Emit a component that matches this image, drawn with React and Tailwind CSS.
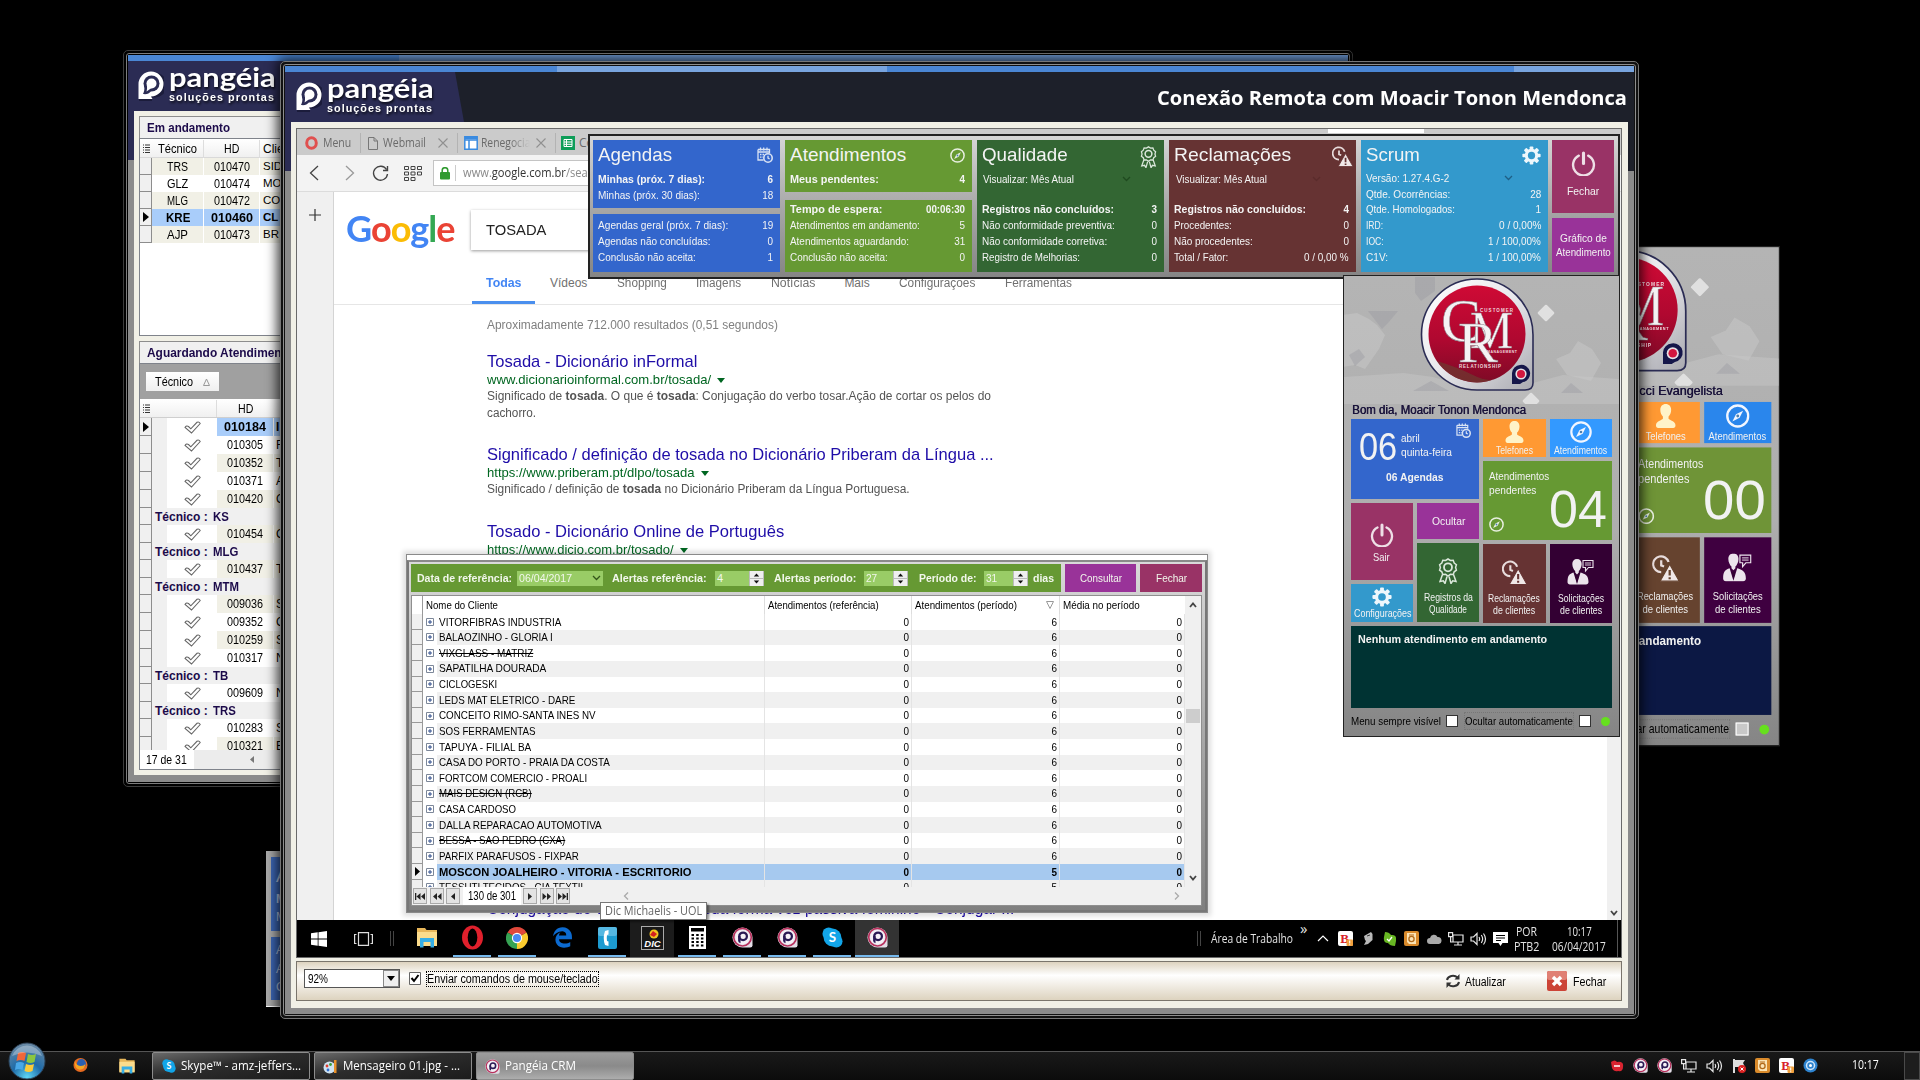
import React, { useLayoutEffect, useRef, useState } from "react";
import { FaEdgeLegacy } from "react-icons/fa";

/* Text squeezed or stretched horizontally so that it takes exactly w pixels. */
function T({ w, className = "", children }) {
  const ref = useRef(null);
  const [k, setK] = useState(1);
  useLayoutEffect(() => {
    const n = ref.current.offsetWidth;
    if (n) setK(w / n);
  }, [w]);
  return (
    <span className={"inline-block shrink-0 whitespace-nowrap " + className} style={{ width: w }}>
      <span ref={ref} className="inline-block origin-left" style={{ transform: `scaleX(${k})` }}>
        {children}
      </span>
    </span>
  );
}

/* ---------- icons ---------- */
const Power = ({ s = 24 }) => (
  <svg width={s} height={s} viewBox="0 0 24 24" fill="none" stroke="#eedfe6" strokeWidth="2.3" strokeLinecap="round">
    <path d="M7.5 4.5a10 10 0 1 0 9 0" />
    <path d="M12 2v10" strokeWidth="3" />
  </svg>
);
const Compass = ({ s = 16, c = "#e8efe0" }) => (
  <svg width={s} height={s} viewBox="0 0 20 20" fill="none" stroke={c} strokeWidth="2">
    <circle cx="10" cy="10" r="8.8" />
    <path d="M14.5 5.5l-3 6-6 3 3-6z" fill={c} stroke="none" />
    <circle cx="10" cy="10" r="1.2" fill="#4d80b0" stroke="none" />
  </svg>
);
const Medal = ({ w = 20, h = 26 }) => (
  <svg width={w} height={h} viewBox="0 0 20 26" fill="none" stroke="#dbe8db" strokeWidth="1.5">
    <path d="M10 1l2.4 1.5 2.8-.2 1 2.7 2.2 1.7-.8 2.7.8 2.7-2.2 1.7-1 2.7-2.8-.2L10 18l-2.4-1.7-2.8.2-1-2.7L1.600 12.100l.8-2.7-.8-2.700L3.800 5l1-2.700 2.800.2z" />
    <circle cx="10" cy="9.300" r="4" strokeWidth="1.8" />
    <path d="M4.500 16.500L2 23.500l3.300-.7L7 25.500l2-7M15.500 16.500l2.500 7-3.300-.7L13 25.500l-2-7" />
  </svg>
);
const ClockWarn = ({ s = 24, bg = "#663333" }) => (
  <svg width={s} height={s} viewBox="0 0 24 24" fill="none" stroke="#e8dcdc" strokeWidth="2">
    <path d="M8 15.500A7 7 0 1 1 14.500 6.500" />
    <path d="M8 5v4.500l2.500 1" />
    <path d="M15.500 8.500L24 23.500H7z" fill="#f0e8e8" stroke={bg} strokeWidth="1" />
    <path d="M15.500 13.500v5M15.500 20v1.800" stroke={bg} />
  </svg>
);
const Gear = ({ s = 20 }) => (
  <svg width={s} height={s} viewBox="0 0 24 24">
    <g fill="#eef7fc">
      <rect x="9.700" y="0.500" width="4.600" height="23" rx="1" />
      <rect x="9.700" y="0.500" width="4.600" height="23" rx="1" transform="rotate(45 12 12)" />
      <rect x="9.700" y="0.500" width="4.600" height="23" rx="1" transform="rotate(90 12 12)" />
      <rect x="9.700" y="0.500" width="4.600" height="23" rx="1" transform="rotate(135 12 12)" />
      <circle cx="12" cy="12" r="8.500" />
    </g>
    <circle cx="12" cy="12" r="4.600" fill="#3399cc" />
  </svg>
);
const CalClock = ({ s = 15 }) => (
  <svg width={s} height={s} viewBox="0 0 16 16" fill="none" stroke="#d8e2f4" strokeWidth="1.300">
    <path d="M1 2.500h11.500V6M1 2.500V13h5.500M1 5h11.500" />
    <path d="M3.500 .5v3M6.700 .5v3M10 .5v3" />
    <path d="M3 7.500h4M3 10.200h3" strokeDasharray="1.500 1" />
    <circle cx="11" cy="11" r="4.200" strokeWidth="1.600" />
    <path d="M11 8.800V11l1.600.8" />
  </svg>
);
const Person = () => (
  <svg width="19" height="22" viewBox="0 0 19 22">
    <path d="M9.500 0c3 0 5 2 5 5.500 0 2.500-1 4.800-2.400 6v2c1 1.500 6.400 2 6.400 6 0 1.600-.8 2.500-2 2.500h-14c-1.200 0-2-.9-2-2.500 0-4 5.400-4.500 6.400-6v-2C5.500 10.300 4.500 8 4.500 5.500 4.500 2 6.500 0 9.500 0z" fill="#fff3c8" />
  </svg>
);
const Talk = () => (
  <svg width="27" height="26" viewBox="0 0 27 26">
    <path d="M10 0c3 0 4.700 2 4.700 5S13 11 11.800 12v1.500L10 15.500 8.200 13.500V12C7 11 5.300 8 5.300 5S7 0 10 0z" fill="#ece4ec" />
    <path d="M6.500 13.500L10 25h0l3.500-11.500c4.500 1.500 8 2.500 8 9.500 0 1.500-1 2.500-2.500 2.500H3C1.500 25.500.5 24.500.5 23c0-7 2-8 6-9.500z" fill="#ece4ec" />
    <path d="M10 16l1.500 2-1.500 6-1.500-6z" fill="#330033" />
    <path d="M16 1.500h10v7h-4.500L18.500 12v-3.500H16z" fill="none" stroke="#ece4ec" strokeWidth="1.100" />
    <path d="M18 4h6M18 6h6" stroke="#ece4ec" strokeWidth="0.900" />
  </svg>
);
const Chev = ({ c = "#1f5f85" }) => (
  <svg width="9" height="6" viewBox="0 0 9 6" fill="none" stroke={c} strokeWidth="1.300">
    <path d="M1 1l3.500 3.500L8 1" />
  </svg>
);
const PBall = ({ s = 21 }) => (
  <svg width={s} height={s} viewBox="0 0 22 22">
    <path d="M11 .5a10.500 10.500 0 0 1 10.500 10.500v8q0 2.500-2.500 2.500h-8A10.500 10.500 0 0 1 11 .5z" fill="#e3dde6" />
    <circle cx="11" cy="10.700" r="9.200" fill="none" stroke="#b8305c" strokeWidth="1.700" />
    <circle cx="11" cy="10.700" r="7.600" fill="#f6f1f7" />
    <circle cx="11.600" cy="9.800" r="4" fill="none" stroke="#2a1a55" strokeWidth="2.400" />
    <path d="M6.400 9.500h2.500v7.500q-2.500-.5-2.500-2.500z" fill="#2a1a55" />
  </svg>
);
const Folder = ({ w = 20, h = 21 }) => (
  <svg width={w} height={h} viewBox="0 0 20 21">
    <path d="M0 1h8l1.500 2H20v15H0z" fill="#e8b75a" />
    <path d="M0 5h20v14H0z" fill="#fbdc8c" />
    <path d="M3 11h14v9.500h-3.500V15h-7v5.500H3z" fill="#36aee6" />
  </svg>
);
const SkypeIcon = ({ s = 21 }) => (
  <svg width={s} height={s} viewBox="0 0 22 22">
    <circle cx="7" cy="7" r="6.500" fill="#12a5e8" />
    <circle cx="15" cy="15" r="6.500" fill="#12a5e8" />
    <circle cx="11" cy="11" r="9.300" fill="#12a5e8" />
    <text x="11" y="16" textAnchor="middle" fontFamily="Lato" fontWeight="700" fontSize="14" fill="#fff">S</text>
  </svg>
);
const Net = () => (
  <svg width="16" height="14" viewBox="0 0 16 14" fill="none" stroke="#e6e6e6" strokeWidth="1.200">
    <path d="M5 3h10v7H5zM10 10v3M6 13h8M.6.6h4v4h-4zM2.600 4.600V10H5" />
  </svg>
);
const Speaker = () => (
  <svg width="17" height="14" viewBox="0 0 17 14" fill="none" stroke="#e6e6e6" strokeWidth="1.200">
    <path d="M1 5h2.500L7 1.500v11L3.500 9H1zM9 5q1.300 2 0 4M11.300 3q2.700 4 0 8M13.500 1.500q4 5.500 0 11" />
  </svg>
);
const BIcon = ({ s = 15 }) => (
  <svg width={s} height={s} viewBox="0 0 15 15">
    <rect width="15" height="15" rx="2" fill="#fff" />
    <text x="6.500" y="12" textAnchor="middle" fontFamily="Liberation Serif" fontWeight="700" fontSize="13" fill="#d8202a">B</text>
    <rect x="8.500" y="8.500" width="6.500" height="6.500" rx="1" fill="#f2a03c" />
    <path d="M11.700 9.500v3M11.700 13.200v1" stroke="#fff" strokeWidth="1.100" />
  </svg>
);
const Orange = () => (
  <svg width="15" height="15" viewBox="0 0 15 15">
    <rect width="15" height="15" rx="2" fill="#d98a2b" />
    <path d="M3 2h9v11H5L3 11z" fill="#fbe3b4" />
    <circle cx="7.500" cy="8" r="2.600" fill="none" stroke="#b2691a" strokeWidth="1.300" />
    <path d="M5 4h5" stroke="#b2691a" />
  </svg>
);

/* ---------- header logo ---------- */
function Brand() {
  return (
    <div className="flex items-start text-white">
      <svg width="26" height="30" viewBox="0 0 26 30" className="mt-[1px]">
        <path d="M13 2a12.500 12.500 0 1 1 0 24H14v4H1V14.500A12.500 12.500 0 0 1 13 2z" fill="#11122c" opacity=".6" />
        <path d="M13 .5A12.500 12.500 0 0 1 13 25.500l1.500 2.500H.5V13A12.500 12.500 0 0 1 13 .5z" fill="#fff" />
        <circle cx="13.500" cy="12.500" r="8" fill="#2b2c54" />
        <circle cx="13.500" cy="12.500" r="5" fill="#fff" />
        <path d="M6 14c1 4 0 7-1 9 4 .5 6-.500 8-2.500z" fill="#2b2c54" />
        <path d="M8.800 14c.5 3 .2 5-.3 6.500l5-3.500z" fill="#fff" />
      </svg>
      <div className="ml-[5px] flex flex-col font-['Lato'] font-bold drop-shadow-[1px_2px_1px_rgba(0,0,0,0.7)]">
        <T w={107} className="-mt-[3px] h-[20px] text-[26px] leading-[20px]">pangéia</T>
        <T w={106} className="mt-[5px] h-[10px] font-['Liberation_Sans'] text-[10.500px] leading-[10px] tracking-[1px]">soluções prontas</T>
      </div>
    </div>
  );
}

/* ---------- background window with the queues ---------- */
const running = [
  ["TRS", "010470", "SID", false],
  ["GLZ", "010474", "MO", false],
  ["MLG", "010472", "CO", false],
  ["KRE", "010460", "CL", true],
  ["AJP", "010473", "BR", false],
];
const waiting = [
  ["010184", "I", 2], ["010305", "F", 0], ["010352", "T", 1], ["010371", "A", 0], ["010420", "C", 1],
  "KS", ["010454", "C", 1], "MLG", ["010437", "T", 1], "MTM",
  ["009036", "S", 1], ["009352", "C", 0], ["010259", "S", 1], ["010317", "N", 0],
  "TB", ["009609", "N", 0], "TRS", ["010283", "S", 0], ["010321", "E", 1],
];
const tone = ["bg-white", "bg-[#f1f0e6]", "bg-[#a9cdfa] font-bold"];
const ListMark = () => (
  <svg width="7" height="10" viewBox="0 0 7 10" stroke="#333" strokeWidth="1">
    <path d="M0 1h1M2 1h5M0 3.500h1M2 3.500h5M0 6h1M2 6h5M0 8.500h1M2 8.500h5" />
  </svg>
);
const RowMark = ({ on }) => (
  <div className="flex w-[12px] shrink-0 items-center justify-center border-r border-b border-[#8d8d8d] bg-[#f0f0f0]">
    {on && <svg width="6" height="10" viewBox="0 0 6 10"><path d="M0 0l6 5-6 5z" /></svg>}
  </div>
);
function QueueWindow() {
  return (
    <div className="absolute left-[123px] top-[50px] h-[737px] w-[1230px] rounded-[5px] border border-[#3c3c3c] bg-black p-[2px]">
      <div className="flex h-full w-full flex-col rounded-[3px] border border-[#7d7d7d] p-px">
        <div className="flex h-[6px] shrink-0">
          <div className="w-[271px] bg-[#4a86d4]" />
          <div className="flex-1 bg-[#6f9cd9]" />
        </div>
        <div className="flex min-h-0 flex-1 flex-col bg-[linear-gradient(#2b2c54_0_99px,#8b8b8b_99px)] px-[6px] pb-[7px]">
          <div className="h-[50px] shrink-0 pl-[4px] pt-[9px]"><Brand /></div>
          <div className="flex min-h-0 flex-1 flex-col bg-[#f1f0e6] pl-[5px] pt-[5px] font-['Liberation_Sans'] text-[12px]">
            <div className="flex h-[22px] items-center border-l border-t border-[#8d8d8d] bg-[#f0f0f0] pl-[7px] font-bold text-[#1c0a4a]">
              <T w={83}>Em andamento</T>
            </div>
            <div className="h-[198px] border border-[#7f838b] bg-white">
              <div className="flex h-[19px] items-center border-b border-[#d9d9d9] bg-gradient-to-b from-white to-[#f0f0f0] pt-px">
                <div className="flex w-[12px] justify-center"><ListMark /></div>
                <div className="flex w-[52px] justify-center border-r border-[#ddd]"><T w={39}>Técnico</T></div>
                <div className="flex w-[56px] justify-center border-r border-[#ddd]"><T w={15}>HD</T></div>
                <span className="pl-[3px]">Clie</span>
              </div>
              {running.map(([a, b, c, on], i) => (
                <div key={b} className="flex h-[17px]">
                  <RowMark on={on} />
                  <div className={"flex min-w-0 flex-1 items-center " + tone[on ? 2 : (i + 1) % 2]}>
                    <div className="flex h-full w-[52px] items-center justify-center border-r border-white"><T w={on ? 24 : 21}>{a}</T></div>
                    <div className="flex h-full w-[56px] items-center justify-center border-r border-white"><T w={on ? 42 : 36}>{b}</T></div>
                    <span className="pl-[3px] text-[11.500px]">{c}</span>
                  </div>
                </div>
              ))}
            </div>
            <div className="mt-[5px] flex h-[22px] items-center border-l border-t border-[#8d8d8d] bg-[#f0f0f0] pl-[7px] font-bold text-[#1c0a4a]">
              <T w={146}>Aguardando Atendimento</T>
            </div>
            <div className="flex h-[407px] flex-col overflow-hidden border border-[#7f838b] bg-white">
              <div className="flex h-[35px] shrink-0 items-center bg-[#a0a0a0] pl-[6px]">
                <div className="flex h-[19px] w-[73px] items-center justify-between bg-gradient-to-b from-white to-[#efefef] px-[9px]">
                  <T w={38}>Técnico</T>
                  <svg width="7" height="8" viewBox="0 0 7 8" fill="none" stroke="#999"><path d="M3.500 1L6.500 7.500h-6z" /></svg>
                </div>
              </div>
              <div className="flex h-[19px] shrink-0 items-center border-b border-[#cfcfcf] bg-gradient-to-b from-white to-[#f0f0f0] pt-px">
                <div className="flex w-[12px] justify-center"><ListMark /></div>
                <div className="h-full w-[65px] border-r border-[#ddd]" />
                <div className="flex w-[57px] justify-center"><T w={15}>HD</T></div>
              </div>
              <div className="min-h-0 flex-1 overflow-hidden">
                {waiting.map((r, i) =>
                  typeof r === "string" ? (
                    <div key={i} className="flex h-[17px] bg-[#f0f0f0]">
                      <RowMark />
                      <div className="flex items-center pl-[3px] font-bold text-[#1c0a4a]">
                        <T w={53}>Técnico :</T><span className="ml-[5px] inline-block origin-left scale-x-95">{r}</span>
                      </div>
                    </div>
                  ) : (
                    <div key={i} className="flex h-[18px]">
                      <RowMark on={i === 0} />
                      <div className="w-[15px] shrink-0 bg-[#f0f0f0]" />
                      <div className="flex w-[49px] shrink-0 items-center justify-center pl-[2px]">
                        <svg width="17" height="13" viewBox="0 0 17 13" fill="#fff" stroke="#666" strokeWidth="1.100">
                          <path d="M1 6.500q1.500-2.500 3.500-1l2.300 2.300L13 1.300q2-1 3.200 1.200L7.500 12z" />
                        </svg>
                      </div>
                      <div className={"ml-px flex min-w-0 flex-1 items-center " + tone[r[2]]}>
                        <div className="flex h-full w-[57px] items-center justify-center border-r border-white"><T w={r[2] === 2 ? 42 : 36}>{r[0]}</T></div>
                        <span className="pl-[2px]">{r[1]}</span>
                      </div>
                    </div>
                  )
                )}
              </div>
              <div className="flex h-[19px] shrink-0 items-center bg-[#ececec]">
                <div className="flex h-full w-[54px] items-center bg-white pl-[6px]"><T w={41}>17 de 31</T></div>
                <svg width="4" height="7" viewBox="0 0 4 7" className="ml-[56px]"><path d="M4 0v7L0 3.500z" fill="#777" /></svg>
              </div>
            </div>
          </div>
        </div>
      </div>
    </div>
  );
}

/* ---------- CRM side menu ---------- */
const Tile = ({ c = "", children }) => (
  <div className={"flex flex-col items-center overflow-hidden text-[#f2f2f2] " + c}>{children}</div>
);
function CrmLogo() {
  return (
    <svg width="277" height="128" viewBox="0 1 277 128">
      <defs>
        <linearGradient id="silver" x1="0" y1="0" x2="1" y2="1">
          <stop offset="0" stopColor="#ffffff" />
          <stop offset=".5" stopColor="#e8e8ec" />
          <stop offset="1" stopColor="#a9a9b0" />
        </linearGradient>
        <linearGradient id="ruby" x1="0" y1="0" x2="0" y2="1">
          <stop offset="0" stopColor="#cf0a35" />
          <stop offset=".55" stopColor="#b00830" />
          <stop offset="1" stopColor="#7e0a26" />
        </linearGradient>
      </defs>
      <path d="M0 40l14-2 12 6 8 6 8 10-6 14-14 20-10-4-12 2zM213 84l14-6 8-12 14 8 9 14-10 18-24-6z" fill="#c4c4c4" opacity=".6" />
      <path d="M0 102l60-4 30 4 40 12 60-6 30-8 57 4v26H0z" fill="#c8c8c8" opacity=".45" />
      <path d="M72 2h20v14l-14 10-6-8zM25 36h30l-10 12-6 6zM6 80l10-6 6 8-10 9zM218 118l10-10 12 10zM70 116l18-10 18 10z" fill="#98999f" opacity=".4" />
      <path d="M203 31l7 7-7 7-7-7zM188 119l7 7-7 7-7-7z" fill="#e0e0e0" stroke="#e0e0e0" strokeWidth="2.500" strokeLinejoin="round" />
      <path d="M134 4a56 56 0 0 1 56 56v48q0 7-8 7h-48a55.500 55.500 0 0 1 0-111z" fill="url(#silver)" stroke="#2b2c54" strokeWidth="1.600" />
      <circle cx="134" cy="59" r="48.500" fill="url(#ruby)" />
      <path d="M94 86q20 6 36 14t24 3a48 48 0 0 1-60-17z" fill="#6d3b30" opacity=".7" />
      <g fill="#f5f3f4" fontFamily="Liberation Serif" stroke="#8a8088" strokeWidth=".5">
        <text x="98" y="66" fontSize="62" textLength="40" lengthAdjust="spacingAndGlyphs">C</text>
        <text x="127" y="73" fontSize="52" textLength="43" lengthAdjust="spacingAndGlyphs">M</text>
        <text x="115" y="87" fontSize="56" textLength="40" lengthAdjust="spacingAndGlyphs">R</text>
      </g>
      <g fill="#f0d8de" fontFamily="Liberation Sans" fontSize="4.500" fontWeight="700">
        <text x="137" y="37" textLength="33">CUSTOMER</text>
        <text x="144" y="78" fontSize="3.500" textLength="30">MANAGEMENT</text>
        <text x="116" y="93" textLength="42">RELATIONSHIP</text>
      </g>
      <path d="M177 90a8.500 8.500 0 1 1 3 17l-3 2h-8V98a8.500 8.500 0 0 1 8-8z" fill="#15164a" />
      <circle cx="178" cy="99" r="5.600" fill="#e6e0e6" />
      <circle cx="178" cy="99" r="4" fill="#d3173f" />
    </svg>
  );
}
function CrmMenu({ alt }) {
  return (
    <div className="flex h-[462px] w-[277px] flex-col overflow-hidden border border-[#222] bg-gradient-to-b from-[#b4b4b4] via-[#aeaeae] via-[55%] to-[#858585] font-['Liberation_Sans'] text-[10.500px]">
      <div className="-ml-px h-[125px] shrink-0"><CrmLogo /></div>
      <div className="flex h-[18px] shrink-0 items-center pl-[8px] text-[12px] text-[#19123a]">
        {alt ? <T w={77} className="-mt-[3px] ml-[138px] [text-shadow:0.4px_0_currentColor]">cci Evangelista</T> : <T w={174} className="[text-shadow:0.5px_0_currentColor]">Bom dia, Moacir Tonon Mendonca</T>}
      </div>
      <div className="flex h-[203px] shrink-0 gap-[4px] pl-[7px]">
        <div className="flex w-[128px] flex-col gap-[4px]">
          <div className="h-[80px] bg-[#3366cc] text-[#f2f2f2]">
            <div className="flex h-[50px]">
              <T w={38} className="ml-[8px] mt-[3px] h-[47px] text-[38px] leading-[51px]">06</T>
              <div className="ml-[4px] flex w-[53px] flex-col pt-[12px] leading-[14px]">
                <T w={19} className="h-[14px] text-[11px]">abril</T>
                <T w={51} className="h-[14px] text-[11px]">quinta-feira</T>
              </div>
              <div className="ml-[2px] pt-[4px]"><CalClock /></div>
            </div>
            <div className="flex h-[17px] items-center justify-center pr-px font-bold"><T w={58}>06 Agendas</T></div>
          </div>
          <div className="flex gap-[4px]">
            <div className="flex w-[62px] flex-col gap-[4px]">
              <Tile c="h-[77px] bg-[#993366] pr-px pt-[20px]"><Power /><T w={17} className="mt-[3px] text-[11px] leading-[14px]">Sair</T></Tile>
              <Tile c="h-[38px] bg-[#3399cc] pt-[3px]"><Gear /><T w={57} className="text-[10px] leading-[14px]">Configurações</T></Tile>
            </div>
            <div className="flex w-[62px] flex-col gap-[4px]">
              <Tile c="h-[36px] justify-center bg-[#993399]"><T w={33} className="text-[11px]">Ocultar</T></Tile>
              <Tile c="h-[79px] bg-[#336633] pt-[15px] leading-[12px]"><Medal /><T w={49} className="mt-[7px]">Registros da</T><T w={38}>Qualidade</T></Tile>
            </div>
          </div>
        </div>
        <div className="flex w-[129px] flex-col gap-[4px]">
          <div className="flex gap-[4px]">
            <Tile c="h-[38px] w-[63px] bg-[#ff9933] pr-px pt-[2px]"><Person /><T w={37} className="mt-px leading-[12px]">Telefones</T></Tile>
            <Tile c={(alt ? "bg-[#2a86ec]" : "bg-[#3399ff]") + " h-[38px] w-[62px] pr-px pt-[2px]"}><Compass s={22} c="#f2f6ff" /><T w={53} className="mt-px leading-[12px]">Atendimentos</T></Tile>
          </div>
          <div className={"flex h-[79px] justify-between text-[#f2f2f2] " + (alt ? "bg-[#6f9437]" : "bg-[#669933]")}>
            <div className="flex flex-col pl-[6px] pt-[8px] text-[11px] leading-[14px]">
              <T w={60}>Atendimentos</T>
              <T w={47}>pendentes</T>
              <div className="mt-[20px]"><Compass s={15} /></div>
            </div>
            <T w={58} className="mr-[9px] h-[79px] pt-[20px] text-[52px] leading-[56px]">{alt ? "00" : "04"}</T>
          </div>
          <div className="flex gap-[4px] leading-[12px]">
            <Tile c={(alt ? "bg-[#66432f]" : "bg-[#663333]") + " h-[79px] w-[63px] pr-px pt-[16px]"}><ClockWarn s={25} bg={alt ? "#66432f" : "#663333"} /><T w={52} className="mt-[7px]">Reclamações</T><T w={42}>de clientes</T></Tile>
            <Tile c={(alt ? "bg-[#3f0040]" : "bg-[#330033]") + " h-[79px] w-[62px] pr-px pt-[15px]"}><Talk /><T w={46} className="mt-[7px]">Solicitações</T><T w={42}>de clientes</T></Tile>
          </div>
        </div>
      </div>
      <div className={"ml-[7px] mt-[4px] h-[82px] w-[261px] shrink-0 pl-[7px] pt-[6px] text-[11px] font-bold leading-[14px] text-[#f2f2f2] " + (alt ? "bg-[#0c1844]" : "bg-[#003333]")}>
        {alt ? <T w={189}><span className="invisible">Nenhum atendimento em </span>andamento</T> : <T w={189}>Nenhum atendimento em andamento</T>}
      </div>
      <div className="flex h-[26px] items-center pl-[7px] text-[11px] text-black">
        <T w={90}>Menu sempre visível</T>
        <div className="ml-[5px] h-[12px] w-[12px] border border-[#333] bg-white" />
        <T w={108} className="ml-[7px] outline-1 outline-dotted outline-[#777]">Ocultar automaticamente</T>
        <div className={"ml-[6px] h-[12px] w-[12px] border " + (alt ? "border-white bg-[#c8c8c8]" : "border-[#333] bg-white")} />
        <div className="ml-[10px] h-[9px] w-[9px] rounded-full bg-[#66e01e]" />
      </div>
    </div>
  );
}

/* ---------- indicator panel ---------- */
const Stat = ({ l, w, v, vw, b, h = "h-[16px]" }) => (
  <div className={"flex items-center justify-between " + h + (b ? " font-bold" : "")}>
    <T w={w}>{l}</T>
    {vw ? <T w={vw}>{v}</T> : <span className="inline-block origin-right scale-x-90">{v}</span>}
  </div>
);
const Head = ({ t, w, children }) => (
  <div className="flex h-[30px] items-center justify-between text-[19px]">
    <T w={w} className="mt-px">{t}</T>
    {children}
  </div>
);
const cell = "flex flex-col overflow-hidden pl-[5px] pr-[7px] ";
function Indicators() {
  return (
    <div className="absolute left-[291px] top-[5px] flex h-[145px] w-[1032px] gap-[5px] border-2 border-[#222] bg-gradient-to-b from-[#d6d6d6] via-[#a8a8a8] to-[#858585] pl-[3px] pt-[4px] font-['Liberation_Sans'] text-[11px] text-[#f4f4f4]">
      <div className="flex w-[187px] flex-col gap-[6px]">
        <div className={cell + "h-[68px] bg-[#3366cc]"}>
          <Head t="Agendas" w={74}><CalClock s={16} /></Head>
          <div className="h-px" />
          <Stat b l="Minhas (próx. 7 dias):" w={107} v="6" />
          <Stat l="Minhas (próx. 30 dias):" w={102} v="18" />
        </div>
        <div className={cell + "h-[58px] bg-[#3366cc] pt-[3px]"}>
          <Stat l="Agendas geral (próx. 7 dias):" w={130} v="19" />
          <Stat l="Agendas não concluídas:" w={113} v="0" />
          <Stat l="Conclusão não aceita:" w={98} v="1" />
        </div>
      </div>
      <div className="flex w-[187px] flex-col gap-[8px]">
        <div className={cell + "h-[52px] bg-[#669933]"}>
          <Head t="Atendimentos" w={116}><Compass s={15} /></Head>
          <div className="h-px" />
          <Stat b l="Meus pendentes:" w={89} v="4" />
        </div>
        <div className={cell + "h-[72px] bg-[#669933] pt-px"}>
          <Stat b l="Tempo de espera:" w={92} v="00:06:30" vw={39} />
          <Stat l="Atendimentos em andamento:" w={130} v="5" />
          <Stat l="Atendimentos aguardando:" w={119} v="31" />
          <Stat l="Conclusão não aceita:" w={98} v="0" />
        </div>
      </div>
      <div className={cell + "h-[132px] w-[187px] bg-[#336633]"}>
        <Head t="Qualidade" w={86}><span className="pt-[3px]"><Medal w={17} h={22} /></span></Head>
        <div className="mb-[14px] mt-px flex h-[16px] items-center justify-between pl-px pr-[26px]"><T w={91}>Visualizar: Mês Atual</T><Chev c="#1f4a1f" /></div>
        <Stat b l="Registros não concluídos:" w={132} v="3" />
        <Stat l="Não conformidade preventiva:" w={133} v="0" />
        <Stat l="Não conformidade corretiva:" w={125} v="0" />
        <Stat l="Registro de Melhorias:" w={98} v="0" />
      </div>
      <div className={cell + "h-[132px] w-[187px] bg-[#663333]"}>
        <Head t="Reclamações" w={117}><span className="-mr-[4px] pt-[2px]"><ClockWarn s={21} /></span></Head>
        <div className="mb-[14px] mt-px flex h-[16px] items-center justify-between pl-[2px] pr-[28px]"><T w={91}>Visualizar: Mês Atual</T><Chev c="#5a2b2b" /></div>
        <Stat b l="Registros não concluídos:" w={132} v="4" />
        <Stat l="Procedentes:" w={58} v="0" />
        <Stat l="Não procedentes:" w={79} v="0" />
        <Stat l="Total / Fator:" w={54} v="0 / 0,00 %" vw={45} />
      </div>
      <div className={cell + "h-[132px] w-[187px] bg-[#3399cc]"}>
        <Head t="Scrum" w={54}><Gear s={19} /></Head>
        <div className="flex h-[16px] items-center justify-between pr-[28px]"><T w={83}>Versão: 1.27.4.G-2</T><Chev /></div>
        <Stat l="Qtde. Ocorrências:" w={84} v="28" />
        <Stat h="h-[15px]" l="Qtde. Homologados:" w={89} v="1" />
        <Stat l="IRD:" w={17} v="0 / 0,00%" vw={42} />
        <Stat l="IOC:" w={18} v="1 / 100,00%" vw={53} />
        <Stat l="C1V:" w={22} v="1 / 100,00%" vw={53} />
      </div>
      <div className="-ml-px flex w-[62px] flex-col gap-[5px]">
        <Tile c="h-[73px] bg-[#993366] pt-[11px]"><Power s={25} /><T w={32} className="mt-[7px]">Fechar</T></Tile>
        <Tile c="h-[54px] justify-center bg-[#993399] leading-[14px]"><T w={47}>Gráfico de</T><T w={55}>Atendimento</T></Tile>
      </div>
    </div>
  );
}

/* ---------- customer alerts window ---------- */
const clients = [
  ["VITORFIBRAS INDUSTRIA", 122], ["BALAOZINHO - GLORIA I", 114], ["VIXGLASS - MATRIZ", 94, 1], ["SAPATILHA DOURADA", 107],
  ["CICLOGESKI", 58], ["LEDS MAT ELETRICO - DARE", 136], ["CONCEITO RIMO-SANTA INES NV", 157], ["SOS FERRAMENTAS", 97],
  ["TAPUYA - FILIAL BA", 92], ["CASA DO PORTO - PRAIA DA COSTA", 171], ["FORTCOM COMERCIO - PROALI", 148], ["MAIS DESIGN (RCB)", 93, 1],
  ["CASA CARDOSO", 77], ["DALLA REPARACAO AUTOMOTIVA", 163], ["BESSA - SAO PEDRO (CXA)", 126, 1], ["PARFIX PARAFUSOS - FIXPAR", 140],
  ["MOSCON JOALHEIRO - VITORIA - ESCRITORIO", 253, 2], ["TESSUTI TECIDOS - CIA TEXTIL", 147],
];
const Spin = () => (
  <svg width="15" height="15" viewBox="0 0 15 15">
    <rect width="15" height="15" fill="#efefef" />
    <path d="M0 7.500h15M.5 0v15M14.500 0v15" stroke="#bbb" />
    <path d="M7.500 2.500l2.700 3H4.800zM7.500 12.500l2.700-3H4.800z" fill="#111" />
  </svg>
);
const NavBtn = ({ d }) => (
  <div className="flex h-[16px] w-[14px] items-center justify-center border border-[#a9a9a9] bg-[#e3e3e3]">
    <svg width="10" height="7" viewBox="0 0 10 7" fill="#222"><path d={d} /></svg>
  </div>
);
function Alerts() {
  return (
    <div className="absolute left-[109px] top-[425px] flex h-[359px] w-[802px] flex-col border border-[#8a8a8a] bg-white pt-[5px] shadow-[0_0_5px_3px_rgba(0,0,0,0.13)] font-['Liberation_Sans'] text-[11px]">
      <div className="flex min-h-0 flex-1 flex-col border-2 border-[#777] border-t-[#8a8a8a] bg-gradient-to-b from-[#dadada] via-[#a8a8a8] to-[#808080] pl-[2px] pr-[3px] pt-[2px]">
        <div className="flex h-[28px] shrink-0 gap-[4px] text-[#f2f7ec]">
          <div className="flex w-[650px] items-center bg-[#669933] pl-[6px] font-bold">
            <T w={95}>Data de referência:</T>
            <div className="ml-[5px] flex h-[15px] w-[86px] items-center justify-between bg-[#99cc66] pl-[2px] pr-[2px] font-normal"><T w={53}>06/04/2017</T><Chev c="#33551a" /></div>
            <T w={95} className="ml-[9px]">Alertas referência:</T>
            <div className="ml-[8px] flex h-[15px] w-[34px] items-center bg-[#99cc66] pl-[2px] font-normal">4</div><Spin />
            <T w={82} className="ml-[10px]">Alertas período:</T>
            <div className="ml-[8px] flex h-[15px] w-[29px] items-center bg-[#99cc66] pl-[2px] font-normal"><T w={11}>27</T></div><Spin />
            <T w={58} className="ml-[11px]">Período de:</T>
            <div className="ml-[7px] flex h-[15px] w-[29px] items-center bg-[#99cc66] pl-[2px] font-normal"><T w={11}>31</T></div><Spin />
            <T w={21} className="ml-[5px]">dias</T>
          </div>
          <div className="flex w-[71px] items-center justify-center bg-[#993399]"><T w={42}>Consultar</T></div>
          <div className="flex w-[62px] items-center justify-center bg-[#993366]"><T w={31}>Fechar</T></div>
        </div>
        <div className="mt-[3px] flex h-[311px] flex-col border border-[#8f8f8f] bg-white">
          <div className="flex min-h-0 flex-1">
            <div className="flex w-[773px] flex-col overflow-hidden text-black">
              <div className="flex h-[18px] shrink-0 items-center">
                <div className="h-full w-[11px] border-r border-[#999]" />
                <div className="flex h-full w-[342px] items-center border-r border-[#ddd] pl-[3px]"><T w={72}>Nome do Cliente</T></div>
                <div className="flex h-full w-[147px] items-center border-r border-[#ddd] pl-[3px]"><T w={111}>Atendimentos (referência)</T></div>
                <div className="flex h-full w-[148px] items-center justify-between border-r border-[#ddd] pl-[3px] pr-[5px]"><T w={102}>Atendimentos (período)</T>
                  <svg width="8" height="8" viewBox="0 0 8 8" fill="none" stroke="#999"><path d="M.5 .5h7L4 7.500z" /></svg></div>
                <T w={77} className="ml-[3px]">Média no período</T>
              </div>
              {clients.map(([n, w, f], i) => {
                const bg = f === 2 ? " bg-[#a6c9ef]" : i % 2 ? " bg-[#f0f0f0]" : " bg-white";
                const val = "flex h-full items-center justify-end border-r border-[#e4e4e4] pr-[2px]" + bg;
                return (
                  <div key={n} className={"flex h-[15.640px] shrink-0 items-center text-[11px]" + (f === 2 ? " font-bold" : "")}>
                    <div className="flex h-full w-[11px] items-center justify-center border-b border-r border-[#999] bg-[#f0f0f0]">
                      {f === 2 && <svg width="5" height="9" viewBox="0 0 5 9"><path d="M0 0l5 4.500L0 9z" /></svg>}
                    </div>
                    <div className="flex w-[14px] justify-center">
                      <svg width="8" height="8" viewBox="0 0 8 8" fill="#fff" stroke="#7c8799"><path d="M.5.5h7v7h-7z" /><path d="M2 4h4M4 2v4" stroke="#2c4a8a" /></svg>
                    </div>
                    <div className={"flex h-full w-[328px] items-center border-r border-[#e4e4e4] pl-[2px]" + bg}>
                      <T w={w}>
                        <span className={f === 1 ? "line-through" : ""}>{n}</span>
                      </T>
                    </div>
                    <div className={"w-[147px] " + val}><span className="inline-block origin-right scale-x-90">0</span></div>
                    <div className={"w-[148px] " + val}><span className="inline-block origin-right scale-x-90">{i > 15 ? 5 : 6}</span></div>
                    <div className={"w-[125px] " + val}><span className="inline-block origin-right scale-x-90">0</span></div>
                  </div>
                );
              })}
            </div>
            <div className="flex flex-1 flex-col items-center bg-[#f0f0f0] py-[6px]">
              <svg width="8" height="6" viewBox="0 0 8 6" fill="none" stroke="#444" strokeWidth="1.800"><path d="M1 5l3-3.500L7 5" /></svg>
              <div className="mt-[101px] h-[14px] w-[14px] bg-[#cdcdcd]" />
              <div className="flex-1" />
              <svg width="8" height="6" viewBox="0 0 8 6" fill="none" stroke="#444" strokeWidth="1.800"><path d="M1 1l3 3.500L7 1" /></svg>
            </div>
          </div>
          <div className="flex h-[18px] shrink-0 items-center gap-[2.500px] bg-[#f0f0f0] pl-px">
            <NavBtn d="M0 0h1.300v7H0zM5.500 0v7L1.500 3.500zM10 0v7L6 3.500z" />
            <NavBtn d="M5 0v7L1 3.500zM9.500 0v7L5.500 3.500z" />
            <NavBtn d="M7 0v7L3 3.500z" />
            <div className="flex h-full w-[58px] items-center justify-center bg-white text-[12px]"><T w={48}>130 de 301</T></div>
            <NavBtn d="M3 0v7l4-3.500z" />
            <NavBtn d="M.5 0v7l4-3.500zM5 0v7l4-3.500z" />
            <NavBtn d="M0 0v7l4-3.500zM4.500 0v7l4-3.500zM8.700 0H10v7H8.700z" />
            <svg width="6" height="8" viewBox="0 0 6 8" fill="none" stroke="#aaa" strokeWidth="1.300" className="ml-[50px]"><path d="M5 .5L1.500 4 5 7.500" /></svg>
            <svg width="6" height="8" viewBox="0 0 6 8" fill="none" stroke="#aaa" strokeWidth="1.300" className="ml-[543px]"><path d="M1 .5L4.500 4 1 7.500" /></svg>
          </div>
        </div>
      </div>
    </div>
  );
}

/* ---------- remote browser ---------- */
const Url = ({ w, children }) => (
  <div className="flex h-[16px] items-center gap-[6px] text-[13.500px] text-[#006621]">
    <T w={w}>{children}</T>
    <svg width="8" height="5" viewBox="0 0 8 5"><path d="M0 0h8L4 5z" fill="#006621" /></svg>
  </div>
);
const Title = ({ w, c = "", children }) => (
  <div className={"flex h-[21px] shrink-0 items-center text-[17px] text-[#1f0da8] " + c}><T w={w}>{children}</T></div>
);
const Cross = () => (
  <svg width="10" height="10" viewBox="0 0 10 10" stroke="#909090" strokeWidth="1.100"><path d="M.5.5l9 9M9.500.5l-9 9" /></svg>
);
const menuTabs = [["Vídeos", 37], ["Shopping", 50], ["Imagens", 45], ["Notícias", 44], ["Mais", 25], ["Configurações", 76], ["Ferramentas", 67]];
function Browser() {
  return (
    <div className="flex h-[791px] flex-col bg-white font-['Liberation_Sans']">
      <div className="flex h-[26px] shrink-0 items-center bg-[#cbcbcb] pl-[8px] pt-[2px] font-['Open_Sans'] text-[12px] text-[#6a6a6a]">
        <svg width="13" height="14" viewBox="0 0 13 14" fill="none" stroke="#e0504f" strokeWidth="3"><ellipse cx="6.500" cy="7" rx="4.800" ry="5.300" /></svg>
        <T w={28} className="ml-[5px]">Menu</T>
        <div className="ml-[9px] h-[20px] w-px bg-[#b3b3b3]" />
        <svg width="10" height="13" viewBox="0 0 10 13" fill="none" stroke="#777" className="ml-[7px]"><path d="M.5.5h5.500l3.500 3.500v8.500h-9zM6 .5V4h3.500" /></svg>
        <T w={43} className="ml-[5px]">Webmail</T>
        <span className="ml-[12px]"><Cross /></span>
        <div className="ml-[9px] h-[20px] w-px bg-[#b3b3b3]" />
        <svg width="14" height="14" viewBox="0 0 14 14" fill="#fff" stroke="#3a8be0" strokeWidth="1.500" className="ml-[6px]"><path d="M.8.8h12.400v12.400H.8zM.8 4h12.400M5 4v9" /><path d="M1 2h12" strokeWidth="2.500" /></svg>
        <T w={49} className="ml-[3px] [mask-image:linear-gradient(90deg,#000_60%,transparent)]">Renegocia</T>
        <span className="ml-[6px]"><Cross /></span>
        <div className="ml-[9px] h-[20px] w-px bg-[#b3b3b3]" />
        <svg width="14" height="14" viewBox="0 0 14 14" className="ml-[5px]"><rect width="14" height="14" fill="#0e9d58" /><path d="M3 3.500h8v7H3zM3 6h8M3 8.300h8M5.500 3.500v7" fill="none" stroke="#fff" /></svg>
        <span className="ml-[4px]">Co</span>
        <div className="-mt-[24px] ml-[734px] h-[4px] w-[96px] bg-white" />
      </div>
      <div className="flex h-[37px] shrink-0 items-center border-b border-[#dcdcdc] bg-[#f3f3f3] pl-[12px]">
        <svg width="10" height="16" viewBox="0 0 10 16" fill="none" stroke="#444" strokeWidth="1.300"><path d="M9 1L1.500 8 9 15" /></svg>
        <svg width="10" height="16" viewBox="0 0 10 16" fill="none" stroke="#999" strokeWidth="1.300" className="ml-[26px]"><path d="M1 1l7.500 7L1 15" /></svg>
        <svg width="17" height="17" viewBox="0 0 17 17" fill="none" stroke="#444" strokeWidth="1.400" className="ml-[17px]"><path d="M14.500 4.500A7 7 0 1 0 15.500 9M15.500 1v4.500H11" /></svg>
        <svg width="18" height="15" viewBox="0 0 18 15" fill="none" stroke="#444" className="ml-[15px]">
          <path d="M.5.5h4v3h-4zM7 .5h4v3H7zM13.500.5h4v3h-4zM.5 6h4v3h-4zM7 6h4v3H7zM13.500 6h4v3h-4zM.5 11.500h4v3h-4zM7 11.500h4v3H7z" />
        </svg>
        <div className="ml-[11px] flex h-[26px] w-[400px] items-center border border-[#c4c4c4] bg-white pl-[6px] font-['Open_Sans'] text-[12px] text-[#8a8a8a]">
          <svg width="10" height="13" viewBox="0 0 10 13"><rect y="5" width="10" height="7.500" rx="1" fill="#2f9a2f" /><path d="M2.200 6V3.500a2.800 2.800 0 0 1 5.600 0V6" fill="none" stroke="#2f9a2f" strokeWidth="1.500" /></svg>
          <div className="ml-[5px] h-[16px] w-px bg-[#ccc]" />
          <T w={141} className="ml-[7px]">www.<span className="text-[#333]">google.com.br</span>/search</T>
        </div>
      </div>
      <div className="flex min-h-0 flex-1">
        <div className="w-[37px] shrink-0 border-r border-[#d4d4d4] bg-[#f0f0f0] pl-[12px] pt-[17px]">
          <svg width="12" height="12" viewBox="0 0 12 12" stroke="#333" strokeWidth="1.200"><path d="M0 6h12M6 0v12" /></svg>
        </div>
        <div className="flex min-w-0 flex-1 flex-col overflow-hidden">
          <div className="flex h-[79px] shrink-0 items-start pl-[12px] pt-[18px]">
            <div className="h-[40px] w-[110px] font-['Lato'] text-[37px] font-bold leading-[36px] tracking-[-1px]">
              <T w={109}>
                <span className="text-[#4285f4]">G</span><span className="text-[#ea4335]">o</span><span className="text-[#fbbc05]">o</span><span className="text-[#4285f4]">g</span><span className="text-[#34a853]">l</span><span className="text-[#ea4335]">e</span>
              </T>
            </div>
            <div className="ml-[15px] flex h-[40px] w-[500px] items-center bg-white pl-[15px] text-[15.500px] text-[#222] shadow-[0_1px_3px_rgba(0,0,0,0.4)]"><T w={60}>TOSADA</T></div>
          </div>
          <div className="flex h-[34px] shrink-0 border-b border-[#e6e6e6] pl-[138px] text-[12px] leading-[24px] text-[#707070]">
            <div className="flex w-[63px] justify-center border-b-[3px] border-[#4a8fee] font-bold text-[#4285f4]"><T w={35}>Todas</T></div>
            <div className="ml-[15px] flex gap-[29.600px]">{menuTabs.map(([t, w]) => <T key={t} w={w}>{t}</T>)}</div>
          </div>
          <div className="flex flex-col pl-[152.500px] text-[12px] text-[#545454]">
            <div className="mt-[12px] flex h-[16px] items-center text-[#808080]"><T w={291}>Aproximadamente 712.000 resultados (0,51 segundos)</T></div>
            <Title w={210} c="mt-[18px]">Tosada - Dicionário inFormal</Title>
            <Url w={224}>www.dicionarioinformal.com.br/tosada/</Url>
            <div className="flex h-[16px] items-center"><T w={504}>Significado de <b>tosada</b>. O que é <b>tosada</b>: Conjugação do verbo tosar.Ação de cortar os pelos do</T></div>
            <div className="flex h-[17px] items-center"><T w={49}>cachorro.</T></div>
            <Title w={507} c="mt-[23px]">Significado / definição de tosada no Dicionário Priberam da Língua ...</Title>
            <Url w={208}>https://www.priberam.pt/dlpo/tosada</Url>
            <div className="flex h-[16px] items-center"><T w={423}>Significado / definição de <b>tosada</b> no Dicionário Priberam da Língua Portuguesa.</T></div>
            <Title w={297} c="mt-[24px]">Tosado - Dicionário Online de Português</Title>
            <Url w={187}>https://www.dicio.com.br/tosado/</Url>
            <Title w={527} c="mt-[340px]">Conjugação do verbo tosar em sua forma voz passiva feminino - Conjugar ...</Title>
          </div>
        </div>
        <div className="flex w-[14px] shrink-0 items-end justify-center bg-[#f0f0f0] pb-[4px]">
          <svg width="8" height="6" viewBox="0 0 8 6" fill="none" stroke="#444" strokeWidth="1.800"><path d="M1 1l3 3.500L7 1" /></svg>
        </div>
      </div>
    </div>
  );
}

/* ---------- remote taskbar ---------- */
const Opera = () => <svg width="21" height="25" viewBox="0 0 21 25"><ellipse cx="10.500" cy="12.500" rx="10.500" ry="12" fill="#e0202c" /><ellipse cx="10.500" cy="12.500" rx="4.800" ry="9" fill="#000" /></svg>;
const Chrome = () => (
  <svg width="22" height="24" viewBox="0 0 24 24">
    <path d="M12 12L1.600 6A12 12 0 0 1 22.400 6z" fill="#e1483b" />
    <path d="M12 12l10.400-6A12 12 0 0 1 12 24z" fill="#fbcb2e" />
    <path d="M12 12v12A12 12 0 0 1 1.600 6z" fill="#36a354" />
    <circle cx="12" cy="12" r="5.600" fill="#fff" /><circle cx="12" cy="12" r="4.400" fill="#4a8af4" />
  </svg>
);
const Phone = () => <svg width="19" height="22" viewBox="0 0 19 22"><rect width="19" height="22" rx="2" fill="#1d9bd0" /><rect width="19" height="9" rx="2" fill="#7ccbee" opacity=".6" /><path d="M7 4l3.500-1v4.500L9 8q-.5 3 0 6l1.500.5V19L7 18Q4.500 11 7 4z" fill="#fff" /></svg>;
const Dic = () => (
  <svg width="23" height="24" viewBox="0 0 23 24"><rect x=".5" y=".5" width="22" height="23" fill="#181818" stroke="#aaa" /><circle cx="13" cy="8" r="4.500" fill="#f2c51f" /><path d="M9 9l3-4 4 3-3 3z" fill="#d42020" />
    <text x="11.500" y="21" textAnchor="middle" fontFamily="Liberation Sans" fontWeight="700" fontStyle="italic" fontSize="9.500" fill="#fff">DIC</text></svg>
);
const Calc = () => (
  <svg width="17" height="23" viewBox="0 0 17 23"><rect width="17" height="23" fill="#fff" /><rect x="2" y="2" width="13" height="3.500" fill="#000" />
    <path d="M2.500 9h12.500M2.500 12.500h12.500M2.500 16h12.500M2.500 19.500h12.500" stroke="#000" strokeWidth="2" strokeDasharray="2.500 2.200" /></svg>
);
const apps = [
  [<Folder />, 0], [<Opera />, 1], [<Chrome />, 1], [<FaEdgeLegacy size={21} color="#0c6ad0" />, 0], [<Phone />, 1],
  [<Dic />, 2], [<Calc />, 1], [<PBall />, 1], [<PBall />, 1], [<SkypeIcon />, 1], [<PBall />, 3],
];
const appTone = ["mx-[3px] w-[38px] border-transparent", "mx-[3px] w-[38px] border-[#76b9ed]", "w-[44px] border-[#1c1c1c] bg-[#1c1c1c]", "w-[44px] border-[#76b9ed] bg-[#333]"];
function RemoteTaskbar() {
  return (
    <div className="flex h-[37px] items-center bg-black font-['Open_Sans'] text-[12px] text-[#e4e4e4]">
      <svg width="16" height="16" viewBox="0 0 16 16" className="ml-[14px]" fill="#fff"><path d="M0 2.300L6.700 1.300v6.300H0zM7.500 1.200L16 0v7.600H7.500zM0 8.400h6.700v6.300L0 13.700zM7.500 8.400H16V16l-8.500-1.200z" /></svg>
      <svg width="19" height="14" viewBox="0 0 19 14" fill="none" stroke="#ddd" strokeWidth="1.200" className="ml-[27px]"><path d="M4.500 .6h10v12.800h-10zM2.500 2.500H.6v9h1.900M16.500 2.500h1.900v9h-1.900" /></svg>
      <div className="ml-[17px] h-[15px] w-[4px] border-x border-[#444]" />
      <div className="ml-[11px] flex h-full gap-px">
        {apps.map(([ic, t], i) => (
          <div key={i} className={"flex h-full items-center justify-center border-b-2 " + appTone[t]}>{ic}</div>
        ))}
      </div>
      <div className="ml-[298px] h-[15px] w-[4px] border-x border-[#444]" />
      <T w={82} className="ml-[10px]">Área de Trabalho</T>
      <span className="-mt-[20px] ml-[7px] text-[15px]">»</span>
      <svg width="12" height="7" viewBox="0 0 12 7" fill="none" stroke="#fff" strokeWidth="1.200" className="ml-[10px]"><path d="M1 6l5-5 5 5" /></svg>
      <span className="ml-[9px]"><BIcon /></span>
      <svg width="11" height="13" viewBox="0 0 11 13" className="ml-[9px]"><path d="M2 4l7-4 1.500 2v6L6 12l-4 1 2-4-1-1z" fill="#b9b9b9" /><path d="M5 4l3-1" stroke="#333" /></svg>
      <svg width="13" height="14" viewBox="0 0 13 14" className="ml-[10px]"><path d="M2 0q4 0 6 3 6-1 5 6l-1 5q-5 0-7-3-5 0-4-6z" fill="#68b723" /><path d="M4 7l2 2 3-4" fill="none" stroke="#fff" strokeWidth="1.300" /></svg>
      <span className="ml-[8px]"><Orange /></span>
      <svg width="15" height="10" viewBox="0 0 15 10" className="ml-[8px]"><path d="M3 10a3 3 0 0 1 0-6 4 4 0 0 1 7.500-1A3.600 3.600 0 0 1 12 10z" fill="#a9a9a9" /></svg>
      <span className="ml-[6px]"><Net /></span>
      <span className="ml-[6px]"><Speaker /></span>
      <svg width="15" height="14" viewBox="0 0 15 14" className="ml-[6px]"><path d="M0 0h15v11H9.500L7.500 14l-2-3H0z" fill="#fff" /><path d="M3 3.500h9M3 6h9M3 8.500h5" stroke="#000" /></svg>
      <div className="ml-[5px] flex w-[26px] flex-col items-center leading-[15px]"><T w={21}>POR</T><T w={25}>PTB2</T></div>
      <div className="ml-[12px] flex w-[56px] flex-col items-center leading-[15px]"><T w={25}>10:17</T><T w={54}>06/04/2017</T></div>
      <div className="ml-auto mr-[3px] h-full w-px bg-[#555]" />
    </div>
  );
}

/* ---------- foreground remote window ---------- */
function RemoteWindow() {
  return (
    <div className="absolute left-[280px] top-[61px] h-[958px] w-[1359px] rounded-[5px] border border-[#777] bg-[#111] p-[2px] shadow-[0_0_12px_3px_rgba(0,0,0,0.75)]">
      <div className="flex h-full w-full flex-col rounded-[3px] border border-[#8e8e8e] p-px">
        <div className="flex h-[6px] shrink-0">
          <div className="w-[272px] bg-[#4a86d4]" />
          <div className="w-[330px] bg-[#78a4de]" />
          <div className="flex-1 bg-[#4a86d4]" />
          <div className="w-[120px] bg-[#78a4de]" />
        </div>
        <div className="flex min-h-0 flex-1 flex-col bg-[linear-gradient(90deg,#2b2c54_0_50%,#1d202a_50%)]">
          <div className="flex min-h-0 flex-1 flex-col bg-[linear-gradient(transparent_0_99px,#8b8b8b_99px)]">
            <div className="flex h-[50px] shrink-0 bg-[#1d202a]">
              <div className="w-[179px] bg-[#2b2c54] pl-[11px] pt-[9px] [clip-path:polygon(0_0,170px_0,179px_100%,0_100%)]"><Brand /></div>
              <div className="flex flex-1 items-center justify-end pr-[7px] pt-px font-['Open_Sans'] text-[20px] font-bold text-white"><T w={470}>Conexão Remota com Moacir Tonon Mendonca</T></div>
            </div>
            <div className="mx-[6px] mb-[6px] flex min-h-0 flex-1 flex-col bg-[#f1f0e6] pl-[5px] pr-[6px] pt-[6px]">
              <div className="relative h-[830px] shrink-0 overflow-hidden border border-[#6a6a6a]">
                <Browser />
                <RemoteTaskbar />
                <Indicators />
                <div className="absolute left-[1046px] top-[146px]"><CrmMenu /></div>
                <Alerts />
                <div className="absolute left-[303px] top-[773px] flex h-[18px] w-[107px] items-center justify-center border border-[#777] bg-white font-['Open_Sans'] text-[12px] text-[#666] shadow-[2px_2px_2px_rgba(0,0,0,0.4)]"><T w={97}>Dic Michaelis - UOL</T></div>
              </div>
              <div className="mt-[3px] flex h-[40px] shrink-0 items-center border border-[#7a756c] bg-gradient-to-b from-[#ddd3bf] via-white via-[35%] to-[#ddd3bf] pl-[7px] font-['Liberation_Sans'] text-[12px] text-black">
                <div className="-mt-[5px] flex h-[19px] w-[96px] items-center border border-[#555] bg-white pl-[3px]">
                  <T w={20}>92%</T>
                  <div className="ml-auto flex h-full w-[16px] items-center justify-center border border-[#888] bg-[#efefef]"><svg width="8" height="5" viewBox="0 0 8 5"><path d="M0 0h8L4 5z" /></svg></div>
                </div>
                <svg width="12" height="13" viewBox="0 0 12 13" className="-mt-[5px] ml-[9px]"><path d="M.5.5h11v12H.5z" fill="#fff" stroke="#666" /><path d="M2.500 6l2.500 3 4.500-6" fill="none" stroke="#000" strokeWidth="2" /></svg>
                <div className="-mt-[5px] ml-[5px] flex h-[16px] items-center border border-dotted border-black"><T w={171}>Enviar comandos de mouse/teclado</T></div>
                <svg width="14" height="14" viewBox="0 0 14 14" fill="none" stroke="#333" strokeWidth="2" className="ml-auto"><path d="M1 6a6 5 0 0 1 10.500-2.500M13 8a6 5 0 0 1-10.500 2.500" /><path d="M13.500 0v5.500H8.500zM.5 14V8.500h5z" fill="#333" stroke="none" /></svg>
                <T w={41} className="ml-[5px] mt-px">Atualizar</T>
                <svg width="20" height="20" viewBox="0 0 20 20" className="ml-[41px]"><rect width="20" height="20" rx="2" fill="#cc4437" /><rect width="20" height="9" rx="2" fill="#e08074" /><path d="M6 6l8 8M14 6l-8 8" stroke="#fff" strokeWidth="3.400" /></svg>
                <T w={33} className="ml-[6px] mr-[15px] mt-px">Fechar</T>
              </div>
            </div>
          </div>
        </div>
      </div>
    </div>
  );
}

/* ---------- host taskbar ---------- */
const HostBtn = ({ on, w, icon, children }) => (
  <div className={"mr-[4px] flex h-[28px] w-[158px] items-center gap-[5px] rounded-[2px] border border-[#8c8c8c] pl-[8px] " + (on ? "bg-gradient-to-b from-[#9c9c9c] via-[#8a8a8a] to-[#adadad]" : "bg-gradient-to-br from-[#6a6a6a] via-[#2c2c2c] via-[45%] to-[#1c1c1c]")}>
    {icon}
    <T w={w}>{children}</T>
  </div>
);
function HostTaskbar() {
  return (
    <div className="absolute left-0 top-[1046px] flex h-[34px] w-full items-end bg-[linear-gradient(transparent_0_5px,#555_5px_6px,#191919_6px,#0c0c0c)] font-['Open_Sans'] text-[12px] text-white">
      <svg width="38" height="38" viewBox="0 0 38 38" className="ml-[8px] shrink-0">
        <defs><radialGradient id="orb" cx=".5" cy=".95" r=".95"><stop offset="0" stopColor="#5fd8f5" /><stop offset=".45" stopColor="#1f6ba8" /><stop offset="1" stopColor="#6d8ba5" /></radialGradient></defs>
        <circle cx="19" cy="19" r="18" fill="url(#orb)" stroke="#2d4257" />
        <path d="M10 11q4-2 8 0l-1.500 8q-4-2-8 0z" fill="#f0673a" /><path d="M20 12q4 2 8 0l-1.500 8q-4 2-8 0z" fill="#8cc63f" />
        <path d="M8 21q4-2 8 0l-1.500 7q-4-2-7.500 0z" fill="#4aa8e8" /><path d="M18 22q4 2 8 0l-1.500 7q-4 2-8 0z" fill="#fccb3a" />
        <path d="M4 14A16 16 0 0 1 34 14q-15-7-30 0z" fill="#fff" opacity=".3" />
      </svg>
      <svg width="15" height="16" viewBox="0 0 16 16" className="mb-[7px] ml-[27px]"><circle cx="8" cy="8" r="7.500" fill="#e66a1f" /><circle cx="9" cy="6.500" r="4.800" fill="#2b5fb0" /><path d="M2 3q1 6 6 6 4 0 5-2 0 6-6 6-6-1-5-10z" fill="#f5a623" /></svg>
      <span className="mb-[6px] ml-[31px]"><Folder w={16} h={16} /></span>
      <div className="ml-[17px] flex">
        <HostBtn w={120} icon={<span className="ml-[1px]"><SkypeIcon s={14} /></span>}>Skype™ - amz-jeffers...</HostBtn>
        <HostBtn w={117} icon={<svg width="15" height="15" viewBox="0 0 15 15"><circle cx="6.500" cy="8.500" r="6" fill="#cfe3f2" /><circle cx="4" cy="7" r="1.400" fill="#e04030" /><circle cx="7.500" cy="5.500" r="1.400" fill="#3a9d3a" /><circle cx="5" cy="11" r="1.400" fill="#3070d0" /><path d="M11 1h2.500v13H11z" fill="#e8902a" /></svg>}>Mensageiro 01.jpg - ...</HostBtn>
        <HostBtn on w={71} icon={<PBall s={15} />}>Pangéia CRM</HostBtn>
      </div>
      <div className="mb-[7px] ml-auto flex items-center gap-[9px]">
        <svg width="14" height="12" viewBox="0 0 14 12"><path d="M1 2q4-3 6 0 7-1 6 5 0 5-5 4-4 1-6-3z" fill="#d92430" /><path d="M4 6h6" stroke="#fff" strokeWidth="1.500" /></svg>
        <PBall s={15} /><PBall s={15} /><Net /><Speaker />
        <svg width="14" height="15" viewBox="0 0 14 15"><path d="M1 1h2v14H1zM3 2h10l-2 3 2 4H3z" fill="#ddd" /><circle cx="10" cy="11" r="4" fill="#d22" /><path d="M8.500 9.500l3 3M11.500 9.500l-3 3" stroke="#fff" /></svg>
        <Orange /><BIcon />
        <svg width="15" height="15" viewBox="0 0 15 15"><circle cx="7.500" cy="7.500" r="7" fill="#2d83cf" /><circle cx="7.500" cy="7.500" r="4" fill="none" stroke="#cfe6fa" strokeWidth="1.500" /><circle cx="7.500" cy="7.500" r="1.500" fill="#fff" /></svg>
      </div>
      <T w={27} className="mb-[6px] ml-[34px]">10:17</T>
      <div className="ml-[25px] h-[28px] w-[16px] border border-[#4a4a4a] bg-[#1d1d1d]" />
    </div>
  );
}

export default function App() {
  return (
    <div className="relative h-[1080px] w-[1920px] overflow-hidden bg-black">
      <div className="absolute left-[266px] top-[851px] flex h-[156px] w-[40px] flex-col gap-[6px] border-b border-white bg-[#a9a9a9] py-[6px] pl-[5px] font-['Liberation_Sans'] text-[12px] text-[#b8c8e8]">
        <div className="flex h-[74px] flex-col justify-between bg-[#3c66b4] py-[6px] pl-[5px]"><span className="text-[18px]">A</span><b>M</b><span>M</span></div>
        <div className="flex h-[63px] flex-col justify-between bg-[#3c66b4] py-[4px] pl-[5px]"><span>A</span><span>A</span><span>C</span></div>
      </div>
      <div className="absolute left-[1480px] top-[246px] origin-top-left scale-[1.083]"><CrmMenu alt /></div>
      <QueueWindow />
      <RemoteWindow />
      <HostTaskbar />
    </div>
  );
}
